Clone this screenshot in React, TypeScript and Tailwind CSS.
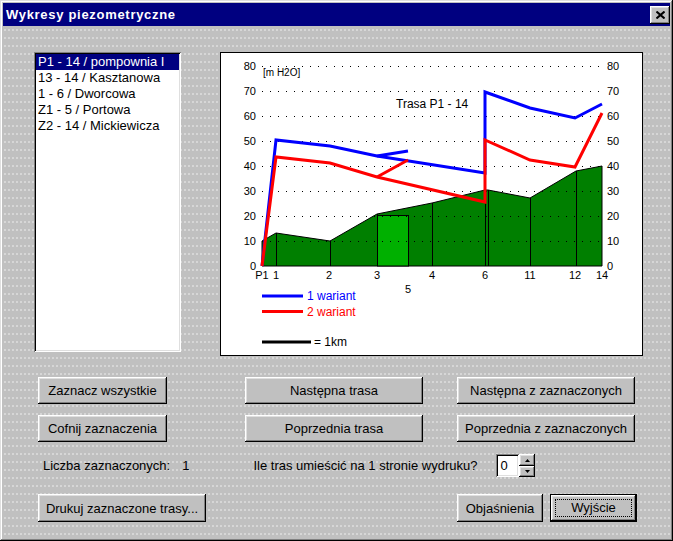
import React from 'react';
import clsx from 'clsx';

const raised =
  'shadow-[inset_-1px_-1px_#000,inset_1px_1px_#fff,inset_-2px_-2px_#808080,inset_2px_2px_#dfdfdf]';
const sunken =
  'shadow-[inset_1px_1px_#808080,inset_-1px_-1px_#fff,inset_2px_2px_#000,inset_-2px_-2px_#dfdfdf]';

function Btn({ children, className }: { children: React.ReactNode; className?: string }) {
  return (
    <button className={clsx('h-[27px] bg-[#c0c0c0] text-[13px] text-black leading-none', raised, className)}>
      {children}
    </button>
  );
}

const routes = [
  'P1 - 14 / pompownia I',
  '13 - 14 / Kasztanowa',
  '1 - 6 / Dworcowa',
  'Z1 - 5 / Portowa',
  'Z2 - 14 / Mickiewicza',
];

function Chart() {
  const levels = [10, 20, 30, 40, 50, 60, 70, 80];
  const y = (v: number) => 266 - 2.5 * v;
  const stations: [string, number][] = [
    ['1', 276],
    ['2', 329],
    ['3', 377],
    ['4', 432],
    ['6', 485],
    ['11', 530],
    ['12', 575],
    ['14', 602],
  ];
  return (
    <svg width={421} height={302} viewBox="221 53 421 302" className="block" fontFamily="'Liberation Sans', Arial, sans-serif">
      {/* terrain */}
      <polygon
        points="262,266 262,241 276,233 330,241 377,214 432,203 485,190 488,190 530,198 576,171 602,166 602,266"
        fill="#007f00"
        stroke="#000"
        strokeWidth={1}
      />
      <rect x={377.5} y={215.5} width={31} height={50.5} fill="#00b000" stroke="#000" strokeWidth={1} />
      {[
        [276, 233],
        [330, 241],
        [377, 214],
        [432, 203],
        [485, 190],
        [488, 190],
        [530, 198],
        [576, 171],
      ].map(([x, t]) => (
        <line key={x} x1={x + 0.5} y1={t} x2={x + 0.5} y2={266} stroke="#000" strokeWidth={1} />
      ))}

      {/* grid */}
      {levels.map((v) => (
        <line
          key={v}
          x1={262}
          y1={y(v) + 0.5}
          x2={603}
          y2={y(v) + 0.5}
          stroke="#000"
          strokeWidth={1}
          strokeDasharray="1 7"
        />
      ))}
      {[0, ...levels].map((v) => (
        <g key={v} fontSize={11} fill="#000">
          <text x={256} y={y(v) + 4} textAnchor="end">
            {v}
          </text>
          <text x={607} y={y(v) + 4}>
            {v}
          </text>
        </g>
      ))}

      {/* variant lines */}
      <g fill="none" strokeWidth={3} strokeLinejoin="miter">
        <polyline points="262,266 276,140 330,146 377,156 485,173 485,92 530,108 575,118 602,104" stroke="#0000ff" />
        <polyline points="377,156 408,151" stroke="#0000ff" />
        <polyline points="262,266 276,157 330,163 377,177 485,202 485,140 530,160 575,167 602,113" stroke="#ff0000" />
        <polyline points="377,177 408,160" stroke="#ff0000" />
      </g>

      <text x={263} y={76} fontSize={10}>
        [m H2O]
      </text>
      <text x={396} y={108} fontSize={12}>
        Trasa P1 - 14
      </text>

      {/* x axis */}
      <g fontSize={11} textAnchor="middle">
        <text x={262} y={279}>
          P1
        </text>
        {stations.map(([l, x]) => (
          <text key={l} x={x} y={279}>
            {l}
          </text>
        ))}
        <text x={408} y={293}>
          5
        </text>
      </g>

      {/* legend */}
      <line x1={262} y1={296} x2={303} y2={296} stroke="#0000ff" strokeWidth={3} />
      <text x={307} y={300} fontSize={12} fill="#0000ff">
        1 wariant
      </text>
      <line x1={262} y1={311.5} x2={303} y2={311.5} stroke="#ff0000" strokeWidth={3} />
      <text x={307} y={316} fontSize={12} fill="#ff0000">
        2 wariant
      </text>
      <line x1={262} y1={342} x2={311} y2={342} stroke="#000" strokeWidth={3} />
      <text x={314} y={346} fontSize={12}>
        = 1km
      </text>
    </svg>
  );
}

export default function App() {
  return (
    <div
      className={clsx(
        "w-[673px] h-[541px] bg-[#c0c0c0] p-[3px] flex flex-col text-black font-['Liberation_Sans',Arial,sans-serif]",
        'shadow-[inset_-1px_-1px_#000,inset_1px_1px_#dfdfdf,inset_-2px_-2px_#808080,inset_2px_2px_#fff]'
      )}
    >
      {/* title bar */}
      <div className="h-[23px] bg-[#000080] flex items-center justify-between pl-[3px]">
        <span className="text-white font-bold text-[13px] tracking-[0.7px]">Wykresy piezometryczne</span>
        <button className={clsx('w-[20px] h-[18px] bg-[#c0c0c0] flex items-center justify-center', raised)}>
          <svg width="9" height="8" viewBox="0 0 9 8">
            <path d="M0.5 0.5 L8.5 7.5 M8.5 0.5 L0.5 7.5" stroke="#000" strokeWidth="2" />
          </svg>
        </button>
      </div>

      {/* body */}
      <div className="flex-1 pl-[31px] pt-[26px] bg-[radial-gradient(circle,#e2e2e2_0.6px,transparent_0.9px)] bg-[length:4px_8px]">
        <div className="flex items-start">
          <div className={clsx('w-[147px] h-[300px] bg-white p-[2px]', sunken)}>
            {routes.map((r, i) => (
              <div
                key={r}
                className={clsx(
                  'h-[16px] pl-[2px] text-[13px] leading-[16px] whitespace-nowrap',
                  i === 0 ? 'bg-[#000080] text-white' : 'text-black'
                )}
              >
                {r}
              </div>
            ))}
          </div>
          <div className="ml-[39px] w-[423px] h-[304px] border border-black bg-white">
            <Chart />
          </div>
        </div>

        <div className="mt-[21px] ml-[4px] flex flex-col gap-[11px]">
          <div className="flex">
            <Btn className="w-[129px]">Zaznacz wszystkie</Btn>
            <Btn className="w-[178px] ml-[78px]">Następna trasa</Btn>
            <Btn className="w-[178px] ml-[34px]">Następna z zaznaczonych</Btn>
          </div>
          <div className="flex">
            <Btn className="w-[129px]">Cofnij zaznaczenia</Btn>
            <Btn className="w-[178px] ml-[78px]">Poprzednia trasa</Btn>
            <Btn className="w-[178px] ml-[34px]">Poprzednia z zaznaczonych</Btn>
          </div>
        </div>

        <div className="mt-[12px] h-[23px] flex items-center text-[13px]">
          <span className="ml-[9px]">Liczba zaznaczonych:</span>
          <span className="ml-[12px]">1</span>
          <span className="ml-[64px]">Ile tras umieścić na 1 stronie wydruku?</span>
          <div className="ml-[19px] flex">
            <div className={clsx('w-[23px] h-[23px] bg-white pl-[4px] flex items-center', sunken)}>0</div>
            <div className="flex flex-col">
              <button className={clsx('w-[16px] h-[12px] bg-[#c0c0c0] flex items-center justify-center', raised)}>
                <svg width="5" height="3" viewBox="0 0 5 3">
                  <path d="M2.5 0 L5 3 L0 3 Z" fill="#000" />
                </svg>
              </button>
              <button className={clsx('w-[16px] h-[11px] bg-[#c0c0c0] flex items-center justify-center', raised)}>
                <svg width="5" height="3" viewBox="0 0 5 3">
                  <path d="M0 0 L5 0 L2.5 3 Z" fill="#000" />
                </svg>
              </button>
            </div>
          </div>
        </div>

        <div className="mt-[17px] ml-[4px] flex">
          <Btn className="w-[168px] h-[28px]">Drukuj zaznaczone trasy...</Btn>
          <Btn className="w-[86px] h-[28px] ml-[251px]">Objaśnienia</Btn>
          <div className="ml-[7px] w-[87px] h-[28px] border border-black">
            <button className={clsx('w-full h-full bg-[#c0c0c0] text-[13px] p-[4px]', raised)}>
              <span className="flex w-full h-full items-center justify-center border border-dotted border-black">
                Wyjście
              </span>
            </button>
          </div>
        </div>
      </div>
    </div>
  );
}
